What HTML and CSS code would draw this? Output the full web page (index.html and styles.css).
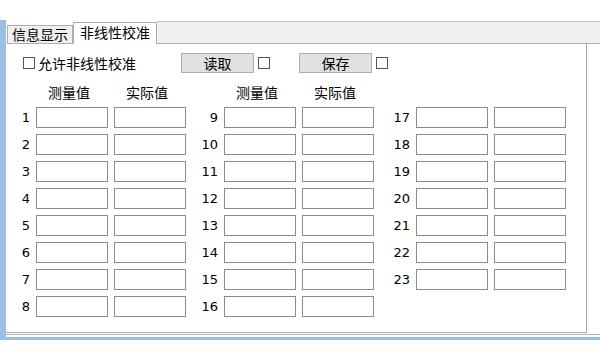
FILE: index.html
```html
<!DOCTYPE html>
<html lang="zh-CN">
<head>
	<meta charset="UTF-8">
	<title>非线性校准</title>
	<link rel="stylesheet" href="styles.css">
</head>
<body>
<div class="frame">
	<div class="tabbar">
		<div class="tab">信息显示</div>
		<div class="tab active">非线性校准</div>
		<div class="tabfill"></div>
	</div>
	<div class="panel">
		<div class="toprow">
			<label class="opt"><span class="box"></span>允许非线性校准</label>
			<button class="btn">读取</button><span class="box after"></span>
			<button class="btn btn2">保存</button><span class="box after"></span>
		</div>
		<div class="grid">
			<div></div><div class="hd">测量值</div><div class="hd">实际值</div>
			<div></div><div class="hd">测量值</div><div class="hd">实际值</div>
			<div></div><div></div><div></div>

			<div class="num">1</div><input class="fld"><input class="fld">
			<div class="num">9</div><input class="fld"><input class="fld">
			<div class="num">17</div><input class="fld"><input class="fld">

			<div class="num">2</div><input class="fld"><input class="fld">
			<div class="num">10</div><input class="fld"><input class="fld">
			<div class="num">18</div><input class="fld"><input class="fld">

			<div class="num">3</div><input class="fld"><input class="fld">
			<div class="num">11</div><input class="fld"><input class="fld">
			<div class="num">19</div><input class="fld"><input class="fld">

			<div class="num">4</div><input class="fld"><input class="fld">
			<div class="num">12</div><input class="fld"><input class="fld">
			<div class="num">20</div><input class="fld"><input class="fld">

			<div class="num">5</div><input class="fld"><input class="fld">
			<div class="num">13</div><input class="fld"><input class="fld">
			<div class="num">21</div><input class="fld"><input class="fld">

			<div class="num">6</div><input class="fld"><input class="fld">
			<div class="num">14</div><input class="fld"><input class="fld">
			<div class="num">22</div><input class="fld"><input class="fld">

			<div class="num">7</div><input class="fld"><input class="fld">
			<div class="num">15</div><input class="fld"><input class="fld">
			<div class="num">23</div><input class="fld"><input class="fld">

			<div class="num">8</div><input class="fld"><input class="fld">
			<div class="num">16</div><input class="fld"><input class="fld">
		</div>
	</div>
	<div class="foot"></div>
</div>
</body>
</html>
```

FILE: styles.css
```css
*{
	padding: 0;
	margin: 0;
	box-sizing: border-box;
}
body{
	background: #fff;
	font-family: "DejaVu Sans", "Noto Sans CJK SC", sans-serif;
	color: #000;
}
.frame{
	margin-top: 20px;
	width: 600px;
	border-left: 6px solid #99bfe3;
	border-bottom: 3px solid #99bfe3;
}
.tabbar{
	display: flex;
	align-items: flex-end;
	height: 24px;
}
.tab{
	height: 19px;
	width: 66px;
	margin-left: 1px;
	border: 1px solid #adadad;
	background: #f0f0f0;
	font-family: "Noto Sans CJK SC", sans-serif;
	font-size: 14px;
	line-height: 17px;
	text-align: center;
}
.tab.active{
	height: 22px;
	width: 84px;
	margin-left: 0;
	border-bottom: none;
	background: #fff;
	line-height: 18px;
}
.tabfill{
	flex: 1;
	height: 23px;
	background: #f0f0f0;
	border-top: 1px solid #c4c4c4;
	border-bottom: 1px solid #a8a8a8;
}
.panel{
	width: 581px;
	height: 289px;
	padding: 9px 0 0 2px;
	border-right: 1px solid #a8a8a8;
	border-bottom: 1px solid #a8a8a8;
}
.toprow{
	display: flex;
	align-items: center;
	margin-left: 15px;
	height: 20px;
}
.opt{
	display: flex;
	align-items: center;
	gap: 3px;
	width: 158px;
	font-family: "Noto Sans CJK SC", sans-serif;
	font-size: 14px;
}
.box{
	display: block;
	width: 12px;
	height: 12px;
	border: 1px solid #555;
	background: #fff;
}
.box.after{
	margin-left: 4px;
}
.btn{
	width: 73px;
	height: 20px;
	background: #e1e1e1;
	border: 1px solid #adadad;
	font-family: "Noto Sans CJK SC", sans-serif;
	font-size: 14px;
	line-height: 18px;
	color: #000;
}
.btn2{
	margin-left: 29px;
}
.grid{
	display: grid;
	grid-template-columns: 22px 72px 72px 26px 72px 72px 30px 72px 72px;
	grid-template-rows: 18px repeat(8, 21px);
	column-gap: 6px;
	row-gap: 6px;
	margin-top: 10px;
}
.hd{
	font-family: "Noto Sans CJK SC", sans-serif;
	font-size: 14px;
	line-height: 18px;
	text-align: center;
	padding-right: 6px;
}
.num{
	font-size: 13px;
	line-height: 21px;
	text-align: right;
}
.fld{
	width: 72px;
	height: 21px;
	border: 1px solid #8c8c8c;
	background: #fff;
	outline: none;
}
.foot{
	height: 3px;
	margin-top: 1px;
	border-top: 1px solid #b4b4b4;
}
```
